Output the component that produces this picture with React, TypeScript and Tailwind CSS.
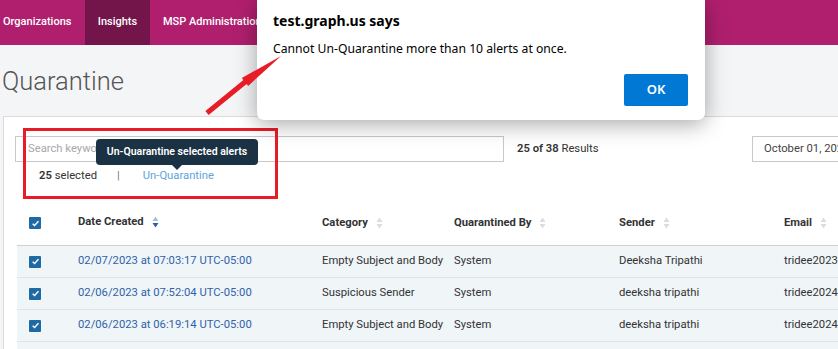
import React from 'react';

type Row = { date: string; category: string; by: string; sender: string; email: string };

const rows: Row[] = [
    { date: '02/07/2023 at 07:03:17 UTC-05:00', category: 'Empty Subject and Body', by: 'System', sender: 'Deeksha Tripathi', email: 'tridee2023@outlook.com' },
    { date: '02/06/2023 at 07:52:04 UTC-05:00', category: 'Suspicious Sender', by: 'System', sender: 'deeksha tripathi', email: 'tridee2024@outlook.com' },
    { date: '02/06/2023 at 06:19:14 UTC-05:00', category: 'Empty Subject and Body', by: 'System', sender: 'deeksha tripathi', email: 'tridee2024@outlook.com' },
    { date: '02/06/2023 at 05:41:09 UTC-05:00', category: 'Suspicious Sender', by: 'System', sender: 'deeksha tripathi', email: 'tridee2024@outlook.com' },
];

const Checkbox: React.FC = () => (
    <span className="flex h-[12px] w-[12px] items-center justify-center rounded-[1px] bg-[#1f6aa5]">
        <svg width="9" height="9" viewBox="0 0 10 10">
            <path d="M1.8 5.2 L4 7.3 L8.3 2.6" fill="none" stroke="white" strokeWidth="1.6" />
        </svg>
    </span>
);

const SortIcon: React.FC<{ active?: boolean }> = ({ active }) => (
    <svg width="7" height="12" viewBox="0 0 7 12" className="ml-[8px]">
        <path d="M3.5 0.5 L6.5 5 L0.5 5 Z" fill={active ? '#a9bfd6' : '#dcdcdc'} />
        <path d="M3.5 11.5 L6.5 7 L0.5 7 Z" fill={active ? '#2a62a6' : '#dcdcdc'} />
    </svg>
);

const App: React.FC = () => {
    return (
        <div className="relative h-[349px] w-[838px] overflow-hidden bg-[#f4f5f7] font-['Roboto',sans-serif] text-[#333]">
            {/* top nav */}
            <div className="flex h-[45px] items-stretch bg-[#b01f6e] text-[11px] font-medium text-white">
                <div className="flex w-[85px] items-center pl-[3px]">Organizations</div>
                <div className="flex w-[65px] items-center justify-center bg-[#73154a]">Insights</div>
                <div className="flex items-center pl-[13px]">MSP Administration</div>
            </div>

            <h1 className="mb-[20px] ml-[2px] mt-[21px] text-[25.5px] font-light leading-[30px] text-[#555]">Quarantine</h1>

            {/* card */}
            <div className="ml-[3px] w-[900px] border border-[#dcdcdc] bg-white pb-4">
                <div className="flex items-center pl-[11px] pt-[19px]">
                    <div className="flex h-[26px] w-[489px] shrink-0 items-center border border-[#c8c8c8] px-[12px] text-[11.25px] text-[#a8a8a8]">
                        Search keyword...
                    </div>
                    <div className="w-[248px] shrink-0 pl-[13px] text-[11.25px]">
                        <span className="font-semibold">25 of 38</span> Results
                    </div>
                    <div className="flex h-[26px] w-[220px] shrink-0 items-center whitespace-nowrap border border-[#c8c8c8] px-[11px] text-[11.25px] text-[#444]">
                        October 01, 2022 - February 07, 2023
                    </div>
                </div>

                <div className="mt-[4px] flex h-[20px] items-center pl-[35px] text-[11.25px]">
                    <span>
                        <span className="font-semibold">25</span> selected
                    </span>
                    <span className="ml-[20px] text-[#777]">|</span>
                    <span className="ml-[23px] text-[#5ea3dc]">Un-Quarantine</span>
                </div>

                {/* table */}
                <div className="ml-[13px] mt-[19px]">
                    <div className="grid h-[41px] grid-cols-[61px_244px_132px_165px_165px_1fr] items-center border-b border-[#cfcfcf] pb-[4px] text-[11.25px] font-bold text-[#333]">
                        <div className="pl-[12px]">
                            <Checkbox />
                        </div>
                        <div className="flex items-center self-start pt-[9px]">
                            Date Created
                            <SortIcon active />
                        </div>
                        <div className="flex items-center">
                            Category
                            <SortIcon />
                        </div>
                        <div className="flex items-center">
                            Quarantined By
                            <SortIcon />
                        </div>
                        <div className="flex items-center">
                            Sender
                            <SortIcon />
                        </div>
                        <div className="flex items-center">
                            Email
                            <SortIcon />
                        </div>
                    </div>
                    {rows.map((r) => (
                        <div
                            key={r.date}
                            className="grid h-[32px] grid-cols-[61px_244px_132px_165px_165px_1fr] items-center whitespace-nowrap border-b border-[#dfe4e8] bg-[#f0f5f8] text-[11.25px] text-[#333]"
                        >
                            <div className="pl-[12px]">
                                <Checkbox />
                            </div>
                            <div className="text-[#2f62a8]">{r.date}</div>
                            <div>{r.category}</div>
                            <div>{r.by}</div>
                            <div>{r.sender}</div>
                            <div>{r.email}</div>
                        </div>
                    ))}
                </div>
            </div>

            {/* red highlight box */}
            <div className="absolute left-[23px] top-[128px] h-[71px] w-[255px] border-[3px] border-[#e81c27]" />

            {/* tooltip */}
            <div className="absolute left-[96px] top-[139px] flex h-[26px] w-[162px] items-center justify-center rounded-[4px] bg-[#1b3244] text-[10.5px] font-semibold text-white">
                Un-Quarantine selected alerts
                <span className="absolute left-[76px] top-[26px] h-0 w-0 border-x-[5px] border-t-[5px] border-x-transparent border-t-[#1b3244]" />
            </div>

            {/* browser alert dialog */}
            <div className="absolute left-[257px] top-0 h-[120px] w-[448px] rounded-b-[7px] bg-white px-[16px] font-['Noto_Sans',sans-serif] text-black shadow-[0_4px_22px_rgba(0,0,0,0.35)]">
                <div className="pt-[10px] text-[14px] font-bold leading-[22px]">test.graph.us says</div>
                <div className="mt-[7px] text-[12.2px] leading-[20px]">Cannot Un-Quarantine more than 10 alerts at once.</div>
                <div className="mt-[15px] flex justify-end pr-[1px]">
                    <div className="flex h-[32px] w-[64px] items-center justify-center rounded-[2px] bg-[#0078d4] text-[13px] font-semibold text-white">
                        OK
                    </div>
                </div>
            </div>

            {/* red arrow, drawn over the dialog */}
            <svg className="absolute left-[200px] top-[50px]" width="90" height="70" viewBox="0 0 90 70">
                <path d="M5.4 61.1 L43.4 30.1 L41.8 28.1 L81 6 L48.2 35.9 L46.6 33.9 L8.6 64.9 Z" fill="#e81c27" />
            </svg>
        </div>
    );
};

export default App;
